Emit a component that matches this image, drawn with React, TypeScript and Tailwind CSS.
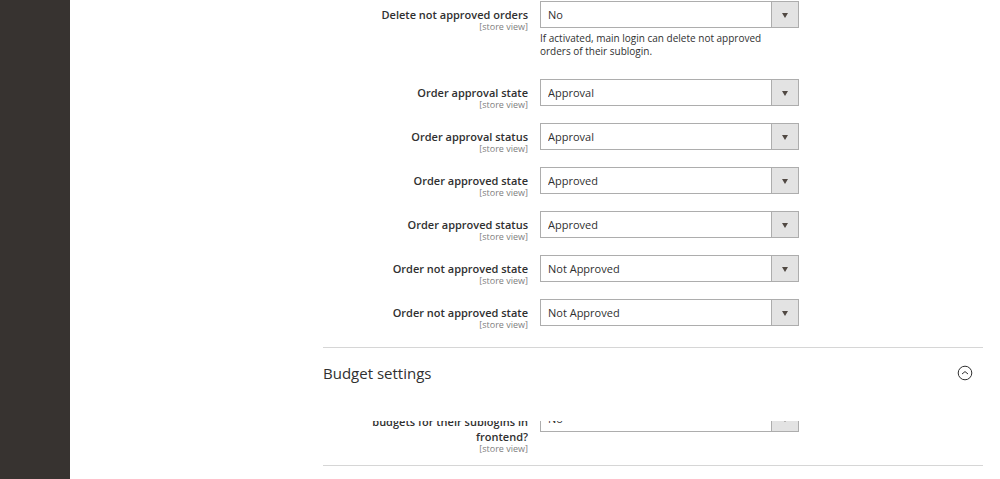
type FieldProps = {
  id: string;
  label: string;
  value: string;
  note?: string;
};

const approvalFields: FieldProps[] = [
  {
    id: "delete-not-approved",
    label: "Delete not approved orders",
    value: "No",
    note: "If activated, main login can delete not approved orders of their sublogin.",
  },
  { id: "approval-state", label: "Order approval state", value: "Approval" },
  { id: "approval-status", label: "Order approval status", value: "Approval" },
  { id: "approved-state", label: "Order approved state", value: "Approved" },
  { id: "approved-status", label: "Order approved status", value: "Approved" },
  { id: "not-approved-state", label: "Order not approved state", value: "Not Approved" },
  { id: "not-approved-status", label: "Order not approved state", value: "Not Approved" },
];

function Select({ id, value }: { id: string; value: string }) {
  return (
    <div className="relative h-[27px] w-[259px]">
      <select
        id={id}
        defaultValue={value}
        className="block h-full w-full appearance-none border border-[#adadad] bg-white pt-0.5 pr-8 pl-[7px] text-[11px] text-[#303030]"
      >
        <option>{value}</option>
      </select>
      <span className="pointer-events-none absolute inset-y-0 right-0 flex w-7 items-center justify-center border border-[#adadad] bg-[#e3e3e3] pt-0.5">
        <svg width="6" height="5" viewBox="0 0 6 5" fill="#514943">
          <path d="M0 0h6L3 5z" />
        </svg>
      </span>
    </div>
  );
}

function StoreView() {
  return <span className="block text-[9px] leading-[9px] font-normal text-[#808080]">[store view]</span>;
}

function Field({ id, label, value, note }: FieldProps) {
  return (
    <div className="flex gap-3">
      <label htmlFor={id} className="w-[205px] pt-1.5 text-right text-[11px] leading-[15px] font-semibold">
        {label}
        <StoreView />
      </label>
      <div>
        <Select id={id} value={value} />
        {note && <p className="w-[240px] pt-1 pb-[7px] text-[10px] leading-[13px]">{note}</p>}
      </div>
    </div>
  );
}

export default function App() {
  return (
    <div className="flex min-h-screen bg-white font-['Open_Sans',sans-serif] text-[#303030]">
      <aside className="w-[70px] shrink-0 bg-[#373330]" />
      <main className="mr-[17px] ml-[253px] flex-1 pt-px">
        <section className="flex flex-col gap-3.5 border-b border-[#d6d6d6] pb-[18px]">
          {approvalFields.map((field) => (
            <Field key={field.id} {...field} />
          ))}
        </section>
        <section className="border-b border-[#d6d6d6]">
          <h2>
            <button type="button" className="flex h-[50px] w-full items-center justify-between pr-2.5 text-[15px]">
              Budget settings
              <svg width="16" height="16" viewBox="0 0 16 16" fill="none" stroke="#303030">
                <circle cx="8" cy="8" r="6.8" />
                <path d="M5 9l3-2.4L11 9" />
              </svg>
            </button>
          </h2>
          <div className="mt-[23px] overflow-hidden pb-3">
            <div className="-mt-4 flex gap-3">
              <label htmlFor="budgets" className="w-[205px] pt-[9px] text-right text-[11px] leading-[15px] font-semibold">
                budgets for their sublogins in
                <br />
                frontend?
                <StoreView />
              </label>
              <Select id="budgets" value="No" />
            </div>
          </div>
        </section>
      </main>
    </div>
  );
}
